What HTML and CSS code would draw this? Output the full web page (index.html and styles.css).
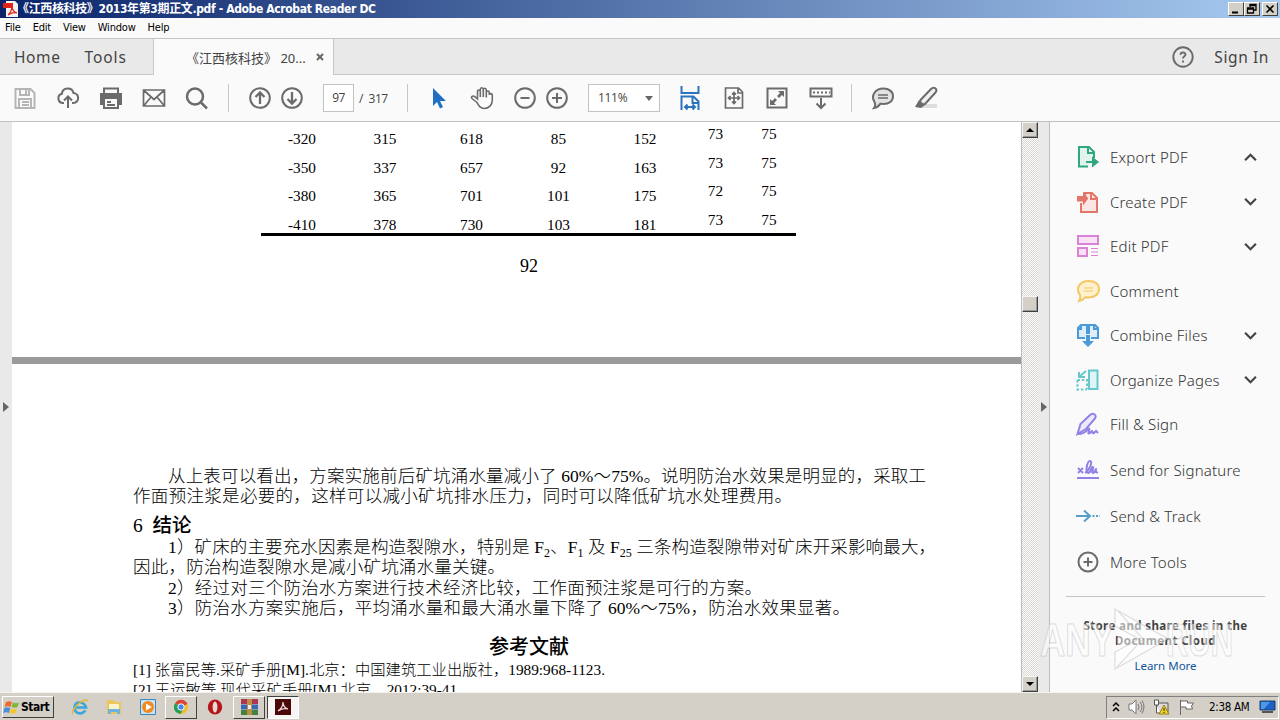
FILE: index.html
```html
<!DOCTYPE html>
<html lang="zh-CN">
<head>
    <meta charset="UTF-8">
    <meta name="viewport" content="width=device-width, initial-scale=1.0">
    <title>Adobe Acrobat Reader DC</title>
    <link rel="stylesheet" href="styles.css">
</head>
<body>
    <div class="titlebar">
        <svg class="app-icon" width="16" height="16" viewBox="0 0 16 16"><path d="M3 0h9l3 3v13H3z" fill="#f4f4f4"/><path d="M0 2h10v5H0z" fill="#e2231a"/><path d="M5 14c3-3 4-7 4-9 0 4 2 6 5 7-3-1-6 0-9 2z" fill="none" stroke="#e2231a" stroke-width="1.2"/></svg>
        <span class="title">《江西核科技》2013年第3期正文.pdf - Adobe Acrobat Reader DC</span>
        <div class="window-btns">
            <span class="win-btn"><svg width="14" height="12"><path d="M3 9.5h6" stroke="#000" stroke-width="2"/></svg></span>
            <span class="win-btn"><svg width="14" height="12"><path d="M5 4V1.5h6V7H9M5 2.5h6M2.5 5h6v5h-6zM2.500 6h6" fill="none" stroke="#000" stroke-width="1.3"/></svg></span>
            <span class="win-btn close"><svg width="14" height="12"><path d="M3.500 2.500l7 7M10.500 2.500l-7 7" stroke="#000" stroke-width="1.6"/></svg></span>
        </div>
    </div>

    <div class="menubar">
        <span>File</span><span>Edit</span><span>View</span><span>Window</span><span>Help</span>
    </div>

    <div class="tabs">
        <div class="tabs-left"><span class="home">Home</span><span class="tools">Tools</span></div>
        <div class="tab-active"><span class="tab-name">《江西核科技》 20...</span><svg width="8" height="8" viewBox="0 0 8 8"><path d="M1 1l6 6M7 1L1 7" stroke="#666" stroke-width="2"/></svg></div>
        <div class="tabs-right">
            <svg width="22" height="22" viewBox="0 0 22 22" fill="none" stroke="#6b6b6b" stroke-width="1.900"><circle cx="11" cy="11" r="9.700"/><path d="M8.500 8.800c0-3.200 5-3 5-.3 0 1.800-2.500 1.800-2.500 4M11 14.500v2"/></svg>
            <span class="sign-in">Sign In</span>
        </div>
    </div>

    <div class="toolbar">
        <div class="group files">
            <svg class="ico faded" viewBox="0 0 24 24"><path d="M2.500 3h15l4 4v15h-19zM7 3v6h9V3M13 4v4M6 22v-9h12v9M9 16h7M9 19h7"/></svg>
            <svg class="ico" viewBox="0 0 24 24"><path d="M8 17H6.500a4.700 4.700 0 0 1-.6-9.200C6.500 1 16 .8 17.500 7c6 .5 6.500 9.600-.5 10h-1M12 22V11M8 14.500l4-4 4 4"/></svg>
            <svg class="ico" viewBox="0 0 24 24"><path d="M5 8V2.500h14V8"/><path d="M1 7h22v12h-3v-6H4v6H1z" fill="#6b6b6b" stroke="none"/><path d="M5 13v9h14v-9M8 16h4M8 19h8"/></svg>
            <svg class="ico" viewBox="0 0 24 24"><path d="M1.500 4h21v16h-21zM2 4.500l10 9 10-9M2 19.500L9 11M22 19.500L15 11" stroke-width="1.700"/></svg>
            <svg class="ico thick" viewBox="0 0 24 24"><circle cx="10" cy="10.500" r="8"/><path d="M16 16.500l6 6"/></svg>
        </div>
        <i class="sep wide"></i>
        <div class="group paging">
            <svg class="ico" viewBox="0 0 24 24"><circle cx="12" cy="12" r="9.800"/><path d="M12 18V7M7.500 11L12 6.500l4.500 4.500" stroke-width="2.300"/></svg>
            <svg class="ico" viewBox="0 0 24 24"><circle cx="12" cy="12" r="9.800"/><path d="M12 6v11M7.500 13l4.500 4.500 4.500-4.500" stroke-width="2.300"/></svg>
        </div>
        <span class="page-input">97</span>
        <span class="page-total">/&nbsp; 317</span>
        <i class="sep"></i>
        <div class="group select-tools">
            <svg class="ico" viewBox="0 0 24 24"><path d="M6 2v18l4-4 3 6.500 3-1.500-3-6h6z" fill="#1f6fc5" stroke="none"/></svg>
            <svg class="ico" viewBox="0 0 24 24"><path d="M7 16.500L2 12.500c-1.500-2 1-3 2.500-2L7.500 13V5.500c0-2 2.800-2 2.800 0V11 3.500c0-2.300 3-2.300 3 0V11 4c0-2.300 3-2.300 3 0v7.500V6.500c0-2 3-2 3 0V9c0-1.800 3-1.800 3 0v5c0 5-3.500 8.500-8 8.500-4 0-5.300-2.500-7.300-6z" stroke-width="1.600"/></svg>
        </div>
        <div class="group zooming">
            <svg class="ico" viewBox="0 0 24 24"><circle cx="12" cy="12" r="9.800"/><path d="M7.500 12h9"/></svg>
            <svg class="ico" viewBox="0 0 24 24"><circle cx="12" cy="12" r="9.800"/><path d="M7 12h10M12 7v10"/></svg>
        </div>
        <span class="zoom-select">111%<i class="caret"></i></span>
        <div class="group view-tools">
            <svg class="ico tall" viewBox="0 0 24 26"><path d="M3.500 1v7h17V1M3.500 25V11.500h12l5 5V25M14.500 12v6h6M7.500 22h9M9.500 19.500L7 22l2.500 2.500M14.500 19.500L17 22l-2.500 2.500" stroke="#2c74bb"/></svg>
            <svg class="ico" viewBox="0 0 24 24"><path d="M3.500 2h13l4 4v16h-17zM16 2v5h5M12 7v10M7 12h10M10 8.500L12 6.500l2 2M10 15.500l2 2 2-2M8.500 10l-2 2 2 2M15.500 10l2 2-2 2" stroke-width="1.700"/></svg>
            <svg class="ico" viewBox="0 0 24 24"><path d="M2.500 2.500h19v19h-19z"/><path d="M13 5h6v6l-2-2-3 3-2-2 3-3zM5 13l2 2 3-3 2 2-3 3 2 2H5z" fill="#6b6b6b" stroke="none"/></svg>
            <svg class="ico" viewBox="0 0 24 24"><path d="M1.500 2.500h21v8h-21zM12 12v10M7.500 17.500L12 22l4.500-4.500"/><path d="M4 6.500h17" stroke-dasharray="2 2"/></svg>
        </div>
        <i class="sep"></i>
        <div class="group notes">
            <svg class="ico" viewBox="0 0 24 24"><path d="M12.500 2.500c5.500 0 9.500 3 9.500 7.800s-4 7.700-9.500 7.700c-1 0-2-.1-3-.4C8 20 6 21.500 3 22c1.500-2 1.500-4 .5-6C-.5 10 4 2.500 12.500 2.500z" fill="#e3e3e3"/><path d="M7 9h10M7 12h10" stroke-width="1.300"/></svg>
            <svg class="ico" viewBox="0 0 24 24"><path d="M8 18h15v4H6z" fill="#ddd" stroke="none"/><path d="M6.500 14L17 3c3-3 7 0 4.500 3.500L11 18l-5 .5z" fill="#f0f0f0"/><path d="M1 21l4-7 6 5-4 3z" fill="#6b6b6b" stroke="none"/></svg>
        </div>
    </div>

    <div class="main">
        <div class="gutter"><i class="arrow-right"></i></div>
        <div class="document">
            <div class="page first">
                <div class="data-table">
                    <span>-320</span><span>315</span><span>618</span><span>85</span><span>152</span><span class="up">73</span><span class="up">75</span>
                    <span>-350</span><span>337</span><span>657</span><span>92</span><span>163</span><span class="up">73</span><span class="up">75</span>
                    <span>-380</span><span>365</span><span>701</span><span>101</span><span>175</span><span class="up">72</span><span class="up">75</span>
                    <span>-410</span><span>378</span><span>730</span><span>103</span><span>181</span><span class="up">73</span><span class="up">75</span>
                </div>
                <div class="page-no">92</div>
            </div>
            <div class="page second">
                <p class="line indent w-intro">从上表可以看出，方案实施前后矿坑涌水量减小了 60%～75%。说明防治水效果是明显的，采取工</p>
                <p class="line w-work">作面预注浆是必要的，这样可以减小矿坑排水压力，同时可以降低矿坑水处理费用。</p>
                <h2>6&nbsp; <b>结论</b></h2>
                <p class="line indent w-one">1）矿床的主要充水因素是构造裂隙水，特别是 F<sub>2</sub>、F<sub>1</sub> 及 F<sub>25</sub> 三条构造裂隙带对矿床开采影响最大，</p>
                <p class="line w-cause">因此，防治构造裂隙水是减小矿坑涌水量关键。</p>
                <p class="line indent w-two">2）经过对三个防治水方案进行技术经济比较，工作面预注浆是可行的方案。</p>
                <p class="line indent w-three">3）防治水方案实施后，平均涌水量和最大涌水量下降了 60%～75%，防治水效果显著。</p>
                <h3>参考文献</h3>
                <p class="ref w-ref1">[1] 张富民等.采矿手册[M].北京：中国建筑工业出版社，1989:968-1123.</p>
                <p class="ref w-ref2">[2] 王运敏等.现代采矿手册[M].北京，2012:39-41.</p>
            </div>
        </div>
        <div class="scrollbar">
            <span class="scroll-btn"><i class="tri-up"></i></span>
            <span class="scroll-btn thumb"></span>
            <span class="scroll-btn bottom"><i class="tri-down"></i></span>
        </div>
        <div class="gutter right"><i class="arrow-right"></i></div>
        <div class="panel">
            <div class="tool"><svg class="ico green" viewBox="0 0 24 24"><path d="M12 21.500H3V2h10l5 5v6M12 2v6h6" fill="#e2f2ee"/><path d="M10 17h9M17 13.500l4.500 3.500-4.500 3.500z" fill="currentColor"/></svg><span>Export PDF</span><svg class="chev" viewBox="0 0 12 8"><path d="M1 6.500l5-5 5 5"/></svg></div>
            <div class="tool"><svg class="ico red" viewBox="0 0 24 24"><path d="M5 13v9h16V8l-5-5H9v3M15 3v6h6" fill="#fae7e3"/><path d="M2 7h6V4.500l3 4-3 4v-2H2z" fill="currentColor"/></svg><span>Create PDF</span><svg class="chev" viewBox="0 0 12 8"><path d="M1 1.500l5 5 5-5"/></svg></div>
            <div class="tool"><svg class="ico pink" viewBox="0 0 24 24"><path d="M2 2h20v8H2zM2 14h9v8H2z" fill="#f9e1f7"/><path d="M15 14.500h7M15 18h7M15 21.500h7" stroke-width="1.200"/></svg><span>Edit PDF</span><svg class="chev" viewBox="0 0 12 8"><path d="M1 1.500l5 5 5-5"/></svg></div>
            <div class="tool"><svg class="ico yellow" viewBox="0 0 24 24"><path d="M12.500 2C19 2 23 5 23 10s-4 8.500-10.500 8.500l-3-.3C8 20 6 21.500 3 22c1-1.500 1.500-3 1-6C-1 9 4 2 12.500 2z" fill="#fff0ce"/><path d="M8 9h9M8 12h9" stroke-width="1"/></svg><span>Comment</span></div>
            <div class="tool"><svg class="ico blue" viewBox="0 0 24 24"><path d="M9 15H2V5l3-3h6v9M5 2v4H1M15 15h7V5l-3-3h-6v9M18 2v4h5" fill="#e0eefa"/><path d="M10 12h4v6h4l-6 6-6-6h4z" fill="currentColor" stroke="none"/></svg><span>Combine Files</span><svg class="chev" viewBox="0 0 12 8"><path d="M1 1.500l5 5 5-5"/></svg></div>
            <div class="tool"><svg class="ico teal" viewBox="0 0 24 24"><path d="M13 2.500h8.500V21H13z" fill="#dff4f4"/><path d="M1.500 12v9.500H11M1.500 12H11v9" stroke-dasharray="2.500 1.800"/><path d="M10 3L4 8M3 4v5h6"/></svg><span>Organize Pages</span><svg class="chev" viewBox="0 0 12 8"><path d="M1 1.500l5 5 5-5"/></svg></div>
            <div class="tool"><svg class="ico violet" viewBox="0 0 24 24"><path d="M1.500 22l3-10L14 3c3-3 7 0 5 3.500L10 17z" fill="#ede9fb"/><path d="M1.500 22c5 0 8-1 10.500-5 1-1 2 0 1 2s-1 3 1 2l2-2c1 0 0 3 2 2l2-2 2 2"/></svg><span>Fill &amp; Sign</span></div>
            <div class="tool low"><svg class="ico violet" viewBox="0 0 24 24"><path d="M1 20h22M2 10l5 5M7 10l-5 5M9 15c5-3 8-12 5-12s-5 12-2 12 4-7 5-6-2 6 0 6 3-5 3-4-1 5 2 3"/></svg><span>Send for Signature</span></div>
            <div class="tool low"><svg class="ico sky" viewBox="0 0 24 24"><path d="M0 12h13M8 6.500l6 5.500-6 5.500"/><path d="M16.500 12H24" stroke-dasharray="2 1.500"/></svg><span>Send &amp; Track</span></div>
            <div class="tool low"><svg class="ico" viewBox="0 0 24 24"><circle cx="12" cy="12" r="9.500"/><path d="M7.500 12h9M12 7.500v9"/></svg><span>More Tools</span></div>
            <div class="cloud">
                <p class="store">Store and share files in the<br>Document Cloud</p>
                <p class="learn">Learn More</p>
            </div>
        </div>
    </div>

    <div class="taskbar">
        <span class="start"><svg width="18" height="17" viewBox="0 0 18 17"><path d="M3 3c2-1 4-1 6 0L7.500 8c-2-1-4-1-6 0z" fill="#ed6b31"/><path d="M10 3.500c2 1 4 1 6 0L14.500 8c-2 1-4 1-6 0z" fill="#79b83c"/><path d="M1.300 9c2-1 4-1 6 0L6 14c-2-1-4-1-6 0z" fill="#4a91d9"/><path d="M8 9.500c2 1 4 1 6 0L12.500 14c-2 1-4 1-6 0z" fill="#f5c632"/></svg>Start</span>
        <span class="task first-task"><svg width="18" height="18" viewBox="0 0 18 18"><path d="M14.500 12.500C10 18 3 15 3.500 9S13 3 15 9.500H5" fill="none" stroke="#3aa4dc" stroke-width="2.600"/><path d="M2 16C-1 12 13-1 17 3" fill="none" stroke="#e8b72e" stroke-width="1.500"/></svg></span>
        <span class="task"><svg width="18" height="18" viewBox="0 0 18 18"><path d="M2 2h6l2 2h6v12H2z" fill="#edc65b"/><path d="M4 6h10v6H4z" fill="#fbf3cc"/><path d="M3 16v-5h12v5h-3v-2H6v2z" fill="#6db3de"/></svg></span>
        <span class="task"><svg width="18" height="18" viewBox="0 0 18 18"><path d="M1.500 1.500h15v15h-15z" fill="#c9e2f4" stroke="#3a87c0"/><circle cx="9" cy="9" r="6" fill="#f08a1d"/><path d="M7 5.500l6 3.500-6 3.500z" fill="#fff"/></svg></span>
        <span class="task raised"><svg width="16" height="16" viewBox="0 0 16 16"><circle cx="8" cy="8" r="7" fill="#f3bd27"/><path d="M8 8L2 4.300A7 7 0 0 1 14.500 5z" fill="#db4437"/><path d="M8 8l-6-3.700A7 7 0 0 0 7.500 15l3-5z" fill="#259d58"/><circle cx="8" cy="8" r="3.200" fill="#4285f4" stroke="#fff"/></svg></span>
        <span class="task opera"><svg width="16" height="16" viewBox="0 0 16 16"><ellipse cx="8" cy="8" rx="7.200" ry="7.500" fill="#b3161b"/><ellipse cx="8" cy="8" rx="2.400" ry="5.500" fill="#e9d9d5"/></svg></span>
        <span class="task raised"><svg width="17" height="16" viewBox="0 0 17 16"><path d="M0 0h17v5H0z" fill="#ad3650"/><path d="M0 5.500h17v5H0z" fill="#3867b3"/><path d="M0 11h17v5H0z" fill="#43813e"/><path d="M6 0h5v16H6z" fill="#bd8e43"/><path d="M7 6h3v4H7z" fill="#eee"/></svg></span>
        <span class="task pressed"><svg width="16" height="16" viewBox="0 0 16 16"><path d="M0 0h16v16H0z" fill="#4a0808"/><path d="M3 12c3-2 5-6 5-9 0 4 2 6 5 7-4-1-7 0-10 2z" fill="none" stroke="#f1dede" stroke-width="1.200"/></svg></span>
        <div class="tray">
            <svg width="8" height="12" viewBox="0 0 8 12"><path d="M1 5l3-3 3 3M1 10l3-3 3 3" fill="none" stroke="#000" stroke-width="1.500"/></svg>
            <svg width="17" height="16" viewBox="0 0 17 16"><path d="M1 5h3l4-4v14l-4-4H1z" fill="#fff" stroke="#777"/><path d="M10 5q2 3 0 6M12 3q4 5 0 10M14 1.500q4 6 0 13" fill="none" stroke="#777"/></svg>
            <svg width="17" height="16" viewBox="0 0 17 16"><path d="M4 4h11v9H4z" fill="#dcdcdc" stroke="#555"/><path d="M1.500 1h4v5h-4zM3.500 6v8h4" fill="#fff" stroke="#555"/><path d="M11 6l5 9H6z" fill="#f3d122" stroke="#96801b"/><path d="M11 9v3M11 13v1" stroke="#222"/></svg>
            <svg width="17" height="16" viewBox="0 0 17 16"><path d="M2.500 1v15M2.500 2h7v2h6l-2 3 1 3H8V8H3" fill="#fff" stroke="#666"/></svg>
            <span class="clock">2:38 AM</span>
            <svg width="17" height="14" viewBox="0 0 17 14"><path d="M1 1h15v9H1z" fill="#1c62c4" stroke="#1d3d70"/><path d="M2 2h9L5 9H2z" fill="#4f97e8"/><path d="M3 12h11" stroke="#555" stroke-width="2"/></svg>
        </div>
    </div>

    <svg class="watermark" width="200" height="74" viewBox="0 0 200 74">
        <text x="2" y="53" textLength="74" lengthAdjust="spacingAndGlyphs">ANY</text>
        <path d="M77 6l53 30-53 30v-17l24-13-24-13zM80 8l25 28-26 28"/>
        <text x="128" y="53" textLength="67" lengthAdjust="spacingAndGlyphs">RUN</text>
    </svg>
</body>
</html>
```

FILE: styles.css
```css
* {
    margin: 0;
    padding: 0;
    box-sizing: border-box;
}

body {
    width: 1280px;
    height: 720px;
    overflow: hidden;
    display: flex;
    flex-direction: column;
    background: #fafafa;
    color: #000;
    font-family: "Noto Sans", "Noto Sans CJK SC", sans-serif;
    position: relative;
    white-space: nowrap;
}

svg {
    flex: none;
    display: block;
}

/* title bar */
.titlebar {
    height: 18px;
    flex: none;
    display: flex;
    align-items: center;
    padding: 0 2px 0 3px;
    background: linear-gradient(90deg, #0a246a, #a6caf0);
}

.title {
    margin-left: -2px;
    color: #fff;
    font: bold 12px/18px "DejaVu Sans Condensed", "Noto Sans CJK SC", sans-serif;
    letter-spacing: -0.36px;
}

.window-btns {
    margin-left: auto;
    display: flex;
}

.win-btn {
    width: 16px;
    height: 14px;
    background: #d4d0c8;
    border: 1px solid;
    border-color: #fff #404040 #404040 #fff;
}

.win-btn.close {
    margin-left: 2px;
}

.menubar {
    height: 20px;
    flex: none;
    display: flex;
    gap: 12px;
    padding-left: 5px;
    font: 11px/20px "DejaVu Sans Condensed", sans-serif;
    letter-spacing: -0.2px;
}

/* tabs */
.tabs {
    height: 37px;
    flex: none;
    display: flex;
    border-top: 1px solid #c4c4c4;
    color: #444;
    font-size: 16px;
}

.tabs-left,
.tabs-right {
    display: flex;
    align-items: center;
    background: #e9e9e9;
    border-bottom: 1px solid #c9c9c9;
}

.tabs-left {
    width: 154px;
    padding-left: 14px;
    gap: 24px;
    border-right: 1px solid #c9c9c9;
}

.home,
.tools,
.sign-in {
    font-size: 15.5px;
    letter-spacing: 0.6px;
}

.tools {
    letter-spacing: 0.9px;
}

.tab-active {
    width: 179px;
    display: flex;
    align-items: center;
    padding-left: 32px;
}

.tab-name {
    width: 130px;
    font: 13px "Noto Sans", "Noto Sans CJK SC", sans-serif;
}

.tabs-right {
    flex: 1;
    justify-content: flex-end;
    padding-right: 11px;
    gap: 20px;
    border-left: 1px solid #c9c9c9;
}

/* toolbar */
.toolbar {
    height: 47px;
    flex: none;
    display: flex;
    align-items: center;
    padding-left: 13px;
    border-bottom: 1px solid #bfc2bf;
}

.group {
    display: flex;
    align-items: center;
}

.ico {
    width: 24px;
    height: 24px;
    fill: none;
    stroke: currentColor;
    stroke-width: 2;
    color: #6b6b6b;
}

.faded {
    color: #b5b5b5;
}

.thick {
    stroke-width: 2.5;
}

.tall {
    height: 26px;
}

.files {
    gap: 19px;
}

.sep {
    width: 1px;
    height: 28px;
    margin: 0 19px 0 18px;
    background: #c7c7c7;
}

.sep.wide {
    margin-left: 19px;
}

.paging,
.zooming {
    gap: 8px;
}

.page-input,
.zoom-select {
    height: 28px;
    background: #fff;
    border: 1px solid #c2c2c2;
    color: #444;
    font: 12px/26px "Open Sans", sans-serif;
}

.page-input {
    width: 31px;
    margin-left: 19px;
    text-align: center;
    letter-spacing: -0.6px;
}

.page-total {
    width: 30px;
    margin-left: 5px;
    color: #444;
    font: 12px "Open Sans", sans-serif;
    letter-spacing: -0.4px;
}

.select-tools {
    gap: 19px;
}

.zooming {
    margin-left: 19px;
}

.zoom-select {
    width: 72px;
    margin-left: 19px;
    padding: 0 6px 0 9px;
    display: flex;
    align-items: center;
    justify-content: space-between;
    letter-spacing: -0.3px;
}

.caret {
    border: 4px solid transparent;
    border-top: 5px solid #666;
    border-bottom: 0;
}

.view-tools {
    margin-left: 18px;
    gap: 19.5px;
}

.notes {
    gap: 19px;
}

/* document area */
.main {
    height: 570px;
    flex: none;
    display: flex;
}

.gutter {
    width: 12px;
    display: flex;
    align-items: center;
    background: #e9e9e9;
    padding-left: 3px;
}

.gutter.right {
    border-right: 1px solid #bbb;
}

.arrow-right {
    border: 5px solid transparent;
    border-left: 6px solid #666;
    border-right: 0;
}

.document {
    width: 1009px;
    overflow: hidden;
    background: #fff;
    font-family: "Liberation Serif", "Noto Sans CJK SC", serif;
}

.first {
    height: 242px;
    border-bottom: 7px solid #9a9a9a;
}

.data-table {
    width: 535px;
    height: 114px;
    margin-left: 249px;
    padding-top: 2px;
    display: grid;
    grid-template-columns: 82px 84px 89px 85px 88px 53px 54px;
    grid-auto-rows: 28.7px;
    border-bottom: 3px solid #000;
    text-align: center;
    font-size: 15.3px;
    line-height: 29px;
}

.data-table .up {
    margin-top: -5px;
}

.page-no {
    width: 1034px;
    margin-top: 20px;
    font-size: 18px;
    line-height: 20px;
    text-align: center;
}

.second {
    padding: 102px 0 0 121px;
}

.line {
    height: 20.4px;
    font-size: 17.5px;
    line-height: 20.4px;
    font-weight: 300;
    text-align-last: justify;
}

.indent {
    margin-left: 35px;
}

.w-intro { width: 758px; }
.w-work { width: 659px; }
.w-one { width: 768px; }
.w-cause { width: 372px; }
.w-two { width: 594px; }
.w-three { width: 682px; }

sub {
    font-size: 12px;
    line-height: 0;
    vertical-align: -4px;
}

h2 {
    height: 30px;
    font-size: 19.500px;
    line-height: 38px;
    font-weight: normal;
}

h2 b,
h3 {
    font-weight: 500;
}

h3 {
    width: 792px;
    margin-top: 17px;
    font-size: 20px;
    line-height: 24px;
    text-align: center;
}

.ref {
    height: 20px;
    font-size: 15.3px;
    line-height: 21px;
    font-weight: 300;
    text-align-last: justify;
}

.w-ref1 { width: 472px; }
.w-ref2 { width: 328px; }

.scrollbar {
    width: 17px;
    display: flex;
    flex-direction: column;
    border-left: 1px solid #b9bdb9;
    background: repeating-conic-gradient(#d8d5ce 0 25%, #fff 0 50%) 0 0 / 2px 2px;
}

.scroll-btn {
    height: 16px;
    display: flex;
    align-items: center;
    justify-content: center;
    background: #d4d0c8;
    border: 1px solid;
    border-color: #f5f5f5 #404040 #404040 #f5f5f5;
    box-shadow: inset -1px -1px #999;
}

.thumb {
    margin-top: 158px;
}

.bottom {
    margin-top: auto;
}

.tri-up,
.tri-down {
    border: 4px solid transparent;
}

.tri-up {
    border-bottom-color: #000;
    border-top: 0;
}

.tri-down {
    border-top-color: #000;
    border-bottom: 0;
}

/* tools panel */
.panel {
    flex: 1;
    padding: 13px 14px 0 26px;
}

.tool {
    height: 44.5px;
    display: flex;
    align-items: center;
    color: #333;
    font-size: 15px;
    font-weight: 300;
    letter-spacing: 0.2px;
}

.tool.low {
    height: 46px;
}

.tool span {
    margin-left: 10px;
}

.green { color: #2fa77f; }
.red { color: #e2766a; }
.pink { color: #dc82d5; }
.yellow { color: #f4c765; }
.blue { color: #4a9bdc; }
.teal { color: #67c7ca; }
.violet { color: #9381e5; }
.sky { color: #559ec7; }

.chev {
    width: 13px;
    height: 9px;
    margin: 0 9px 0 auto;
    fill: none;
    stroke: #444;
    stroke-width: 2;
}

.cloud {
    width: 199px;
    margin-top: 11.5px;
    padding-top: 21px;
    border-top: 1px solid #c4c4c4;
    margin-left: -10px;
    text-align: center;
}

.store {
    color: #444;
    font: bold 11.5px/15px "Noto Sans", sans-serif;
    letter-spacing: 0.4px;
}

.learn {
    margin-top: 10px;
    color: #14549c;
    font: 11.5px/15px "Noto Sans", sans-serif;
}

/* taskbar */
.taskbar {
    height: 28px;
    flex: none;
    display: flex;
    align-items: center;
    padding: 1px 1px 0 2px;
    background: #d4d0c8;
    border-top: 1px solid #f4f2ed;
}

.start {
    width: 52px;
    height: 22px;
    display: flex;
    align-items: center;
    font: bold 12px "DejaVu Sans Condensed", sans-serif;
    letter-spacing: -0.5px;
    border: 1px solid;
    border-color: #fff #404040 #404040 #fff;
}

.task {
    width: 34px;
    height: 23px;
    display: flex;
    align-items: center;
    justify-content: center;
}

.first-task {
    margin-left: 9px;
}

.raised,
.pressed {
    width: 32px;
    border: 1px solid;
    border-color: #fff #404040 #404040 #fff;
}

.pressed {
    margin-left: 2px;
    background: #f7f6f4;
    border-color: #404040 #fff #fff #404040;
}

.opera {
    width: 36px;
}

.tray {
    width: 173px;
    height: 23px;
    margin-left: auto;
    padding: 0 2px 0 5px;
    display: flex;
    align-items: center;
    gap: 8px;
    border: 1px solid;
    border-color: #808080 #fff #fff #808080;
}

.clock {
    width: 43px;
    margin: 0 2px 0 6px;
    font: 11.5px "DejaVu Sans Condensed", sans-serif;
    letter-spacing: -0.3px;
}

/* watermark lies over the panel and scrollbar */
.watermark {
    position: absolute;
    left: 1038px;
    top: 603px;
    fill: rgba(255, 255, 255, 0.55);
    stroke: rgba(140, 140, 140, 0.28);
    stroke-width: 1.2;
    font: bold 46px "Liberation Sans", sans-serif;
}
```
